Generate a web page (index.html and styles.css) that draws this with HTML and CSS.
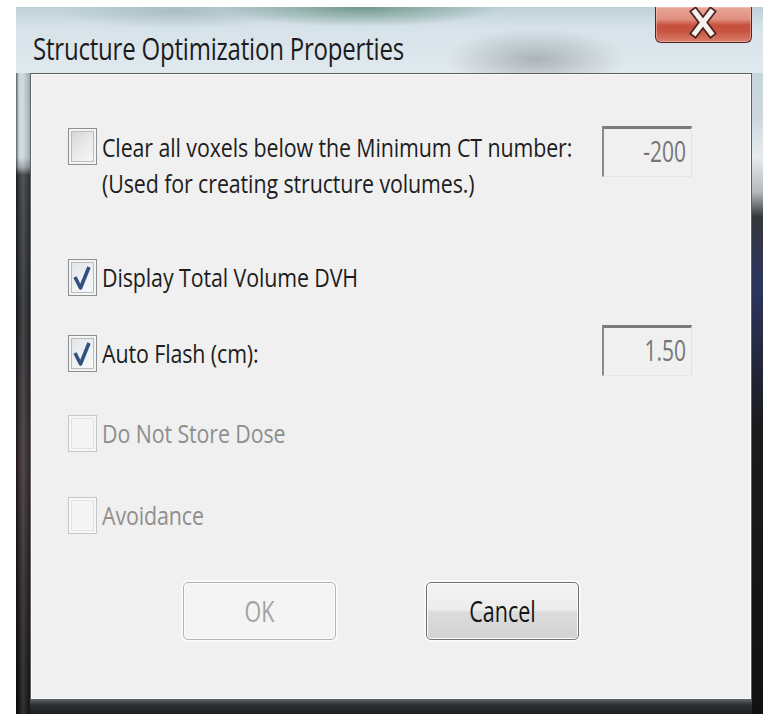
FILE: index.html
```html
<!DOCTYPE html>
<html>
<head>
<meta charset="utf-8">
<title>Structure Optimization Properties</title>
<link rel="stylesheet" href="styles.css">
</head>
<body>
<div class="window">
  <div class="titlebar">
    <span class="title"><span class="t">Structure Optimization Properties</span></span>
    <div class="close">
      <svg width="97" height="36" viewBox="0 0 97 36">
        <path d="M40 6 L56 27 M56 6 L40 27" stroke="#4a2622" stroke-width="8.5" stroke-linecap="square"/>
        <path d="M40 6 L56 27 M56 6 L40 27" stroke="#f6f2f0" stroke-width="5" stroke-linecap="square"/>
      </svg>
    </div>
  </div>
  <div class="client">
    <div class="row row-first">
      <span class="cb"></span>
      <div class="label two"><span class="t">Clear all voxels below the Minimum CT number:</span><br><span class="t">(Used for creating structure volumes.)</span></div>
      <div class="field field-first"><span class="t">-200</span></div>
    </div>
    <div class="row row-dvh">
      <span class="cb checked"><svg width="27" height="35" viewBox="0 0 27 35"><path d="M6 17 L11.5 28 L20 7" fill="none" stroke="#34507e" stroke-width="3.6" stroke-linejoin="round"/></svg></span>
      <div class="label"><span class="t">Display Total Volume DVH</span></div>
    </div>
    <div class="row row-flash">
      <span class="cb checked"><svg width="27" height="35" viewBox="0 0 27 35"><path d="M6 17 L11.5 28 L20 7" fill="none" stroke="#34507e" stroke-width="3.6" stroke-linejoin="round"/></svg></span>
      <div class="label"><span class="t">Auto Flash (cm):</span></div>
      <div class="field field-flash"><span class="t">1.50</span></div>
    </div>
    <div class="row row-dose">
      <span class="cb disabled"></span>
      <div class="label muted"><span class="t">Do Not Store Dose</span></div>
    </div>
    <div class="row row-avoid">
      <span class="cb disabled"></span>
      <div class="label muted"><span class="t">Avoidance</span></div>
    </div>
    <div class="buttons">
      <div class="btn btn-disabled"><span class="t">OK</span></div>
      <div class="btn"><span class="t">Cancel</span></div>
    </div>
  </div>
</div>
</body>
</html>
```

FILE: styles.css
```css
html, body {
  margin: 0;
  padding: 0;
  background: #ffffff;
  overflow: hidden;
  width: 763px;
  height: 721px;
}

body {
  font-family: "Open Sans", "Noto Sans", sans-serif;
}

/* vertically stretched glyphs */
.t {
  display: inline-block;
  transform: scaleY(1.35);
  transform-origin: 50% 50%;
  white-space: pre;
}

.window {
  margin: 7px 0 0 16px;
  width: 752px;
  height: 707px;
  box-sizing: border-box;
  padding: 0 16px 14px 14px;
  display: flex;
  flex-direction: column;
  background:
    /* left frame */
    linear-gradient(to right, rgba(0,0,0,0.55) 0, rgba(0,0,0,0) 3px, rgba(255,255,255,0.12) 7px, rgba(0,0,0,0.2) 14px) left top / 14px 100% no-repeat,
    linear-gradient(to bottom, #c7d5dc 0, #cbd8de 150px, #9aa3a8 160px, #3a3c3e 168px, #2b2c2e 300px, #3b3035 450px, #2c2428 560px, #161616 707px) left top / 14px 100% no-repeat,
    /* right frame */
    linear-gradient(to bottom, #c3d1d8 0, #ccd8de 110px, #e6ecef 150px, #b6b9bb 185px, #34373a 210px, #2d3560 280px, #252a42 340px, #1b1b1d 420px, #121212 707px) right top / 16px 100% no-repeat,
    /* bottom frame */
    linear-gradient(to bottom, #5a5e60 0, #2c2e30 5px, #1e1f20 14px) left bottom / 100% 14px no-repeat,
    #cfdce3;
}

.titlebar {
  margin: 0 -16px 0 -14px;
  height: 66px;
  flex: none;
  display: flex;
  justify-content: space-between;
  align-items: flex-start;
  padding: 0 16px 0 17px;
  background:
    radial-gradient(ellipse 140px 20px at 345px 0, rgba(60,115,85,0.6), rgba(60,115,85,0) 100%),
    radial-gradient(ellipse 90px 30px at 520px 52px, rgba(110,118,122,0.45), rgba(110,118,122,0) 100%),
    radial-gradient(ellipse 120px 18px at 160px 4px, rgba(140,165,170,0.45), rgba(140,165,170,0) 100%),
    linear-gradient(to bottom, #bfd0d8 0, #d6e2e9 30%, #e0e9ee 100%);
}

.title {
  font-size: 24px;
  line-height: 30px;
  margin-top: 26px;
  color: #1c1c1c;
  letter-spacing: -0.2px;
}

.title .t { transform: scaleY(1.3); }

.close {
  width: 97px;
  height: 36px;
  box-sizing: border-box;
  border: 1px solid #4b2723;
  border-top: none;
  border-radius: 0 0 6px 6px;
  overflow: hidden;
  background: linear-gradient(to bottom, #e7a597 0, #e09080 35%, #c9513c 52%, #c65440 70%, #d9806c 100%);
  box-shadow: inset 0 0 0 1px rgba(255,210,200,0.45);
}

.close svg {
  display: block;
  margin: -1px 0 0 -1px;
}

.client {
  flex: 1;
  background: #f0f0f0;
  border: 1px solid #5b5f62;
  box-shadow: inset 0 0 0 1px #fafafa;
  padding: 54px 0 0 37px;
  display: flex;
  flex-direction: column;
  color: #1d1d1d;
}

.row {
  display: flex;
  align-items: flex-start;
  height: 37px;
}

.row-first { height: 73px; }
.row-dvh { margin-top: 58px; }
.row-flash { margin-top: 39px; }
.row-dose { margin-top: 43px; }
.row-avoid { margin-top: 45px; }

.cb {
  flex: none;
  width: 29px;
  height: 37px;
  box-sizing: border-box;
  border: 1px solid #8d8f90;
  background: linear-gradient(135deg, #cfd1d3 0, #e6e7e8 45%, #fafafa 100%);
  box-shadow: inset 0 0 0 2px #f4f4f4, inset 0 0 0 3px #b9bcbf;
}

.cb svg { display: block; }

.cb.checked {
  background: linear-gradient(135deg, #dfe2e6 0, #eef0f2 50%, #fbfbfb 100%);
}

.cb.disabled {
  border-color: #c4c6c8;
  background: #f5f5f5;
  box-shadow: inset 0 0 0 2px #f7f7f7, inset 0 0 0 3px #e2e3e4;
}

.label {
  font-size: 21.4px;
  line-height: 36px;
  margin-left: 5px;
  letter-spacing: -0.1px;
  flex: 1;
}

/* keep the stretched line boxes within their own row */
.label .t {
  line-height: 24px;
  transform: scaleY(1.23);
}

.label.two { margin-top: 1px; }

.label.muted { color: #8e8e8e; }

.field {
  flex: none;
  width: 90px;
  height: 51px;
  box-sizing: border-box;
  margin-right: 59px;
  border-top: 3px solid #7b7b7b;
  border-left: 2px solid #8b8b8b;
  border-right: 1px solid #e2e2e2;
  border-bottom: 1px solid #e6e6e6;
  background: #f0f0f0;
  color: #767676;
  font-size: 21px;
  line-height: 44px;
  text-align: right;
  padding-right: 5px;
}

.field .t { line-height: 26px; }

.field-first { margin-top: -2px; }
.field-flash { margin-top: -10px; }

.buttons {
  display: flex;
  margin-top: 48px;
  padding-left: 115px;
  gap: 90px;
}

.btn {
  width: 153px;
  height: 58px;
  box-sizing: border-box;
  border: 1px solid #6f7275;
  border-radius: 5px;
  background: linear-gradient(to bottom, #f3f3f3 0, #ececec 48%, #dcdcdc 52%, #d2d2d2 100%);
  box-shadow: inset 0 0 0 1px #fbfbfb, 0 0 0 2px rgba(255,255,255,0.6);
  text-align: center;
  font-size: 21.5px;
  line-height: 56px;
  color: #141414;
}

.btn .t { line-height: 26px; }

.btn-disabled {
  border-color: #b0b4b7;
  background: #f4f4f4;
  color: #a3a3a3;
}
```
